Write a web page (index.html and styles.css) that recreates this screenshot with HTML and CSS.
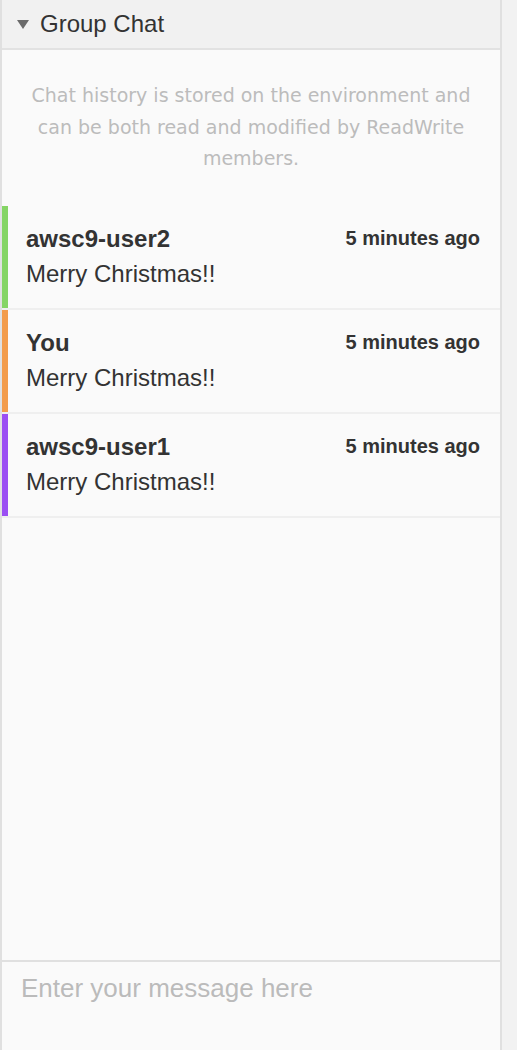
FILE: index.html
```html
<!DOCTYPE html>
<html lang="en">
<head>
  <meta charset="UTF-8" />
  <meta name="viewport" content="width=device-width, initial-scale=1.0"/>
  <title>Group Chat</title>
  <link rel="stylesheet" href="styles.css">
</head>
<body>
  <div class="panel">
    <div class="panel-header">
      <span class="caret"></span>
      <span class="panel-title">Group Chat</span>
    </div>

    <div class="chat-body">
      <p class="notice">Chat history is stored on the environment and can be both read and modified by ReadWrite members.</p>

      <div class="messages">
        <div class="message user-green">
          <div class="message-top">
            <span class="author">awsc9-user2</span>
            <span class="time">5 minutes ago</span>
          </div>
          <div class="text">Merry Christmas!!</div>
        </div>
        <div class="message user-orange">
          <div class="message-top">
            <span class="author">You</span>
            <span class="time">5 minutes ago</span>
          </div>
          <div class="text">Merry Christmas!!</div>
        </div>
        <div class="message user-purple">
          <div class="message-top">
            <span class="author">awsc9-user1</span>
            <span class="time">5 minutes ago</span>
          </div>
          <div class="text">Merry Christmas!!</div>
        </div>
      </div>
    </div>

    <div class="composer">
      <textarea class="chat-input" placeholder="Enter your message here"></textarea>
    </div>
  </div>
</body>
</html>
```

FILE: styles.css
```css
body {
  margin: 0;
  background-color: #f2f2f2;
  font-family: 'Liberation Sans', Arial, sans-serif;
  color: #333;
}

.panel {
  width: 498px;
  height: 1050px;
  border-left: 2px solid #e0e0e0;
  border-right: 2px solid #e0e0e0;
  background-color: #fafafa;
  display: flex;
  flex-direction: column;
}

.panel-header {
  height: 48px;
  background-color: #f1f1f1;
  border-bottom: 2px solid #e2e2e2;
  display: flex;
  align-items: center;
  padding-left: 15px;
}

.caret {
  width: 0;
  height: 0;
  border-left: 6px solid transparent;
  border-right: 6px solid transparent;
  border-top: 9px solid #6b6b6b;
  margin-right: 11px;
  margin-top: 1px;
}

.panel-title {
  font-size: 24px;
  color: #333;
}

.chat-body {
  flex: 1;
}

.notice {
  margin: 0;
  padding: 30px 20px 31px;
  text-align: center;
  font-family: 'DejaVu Sans', sans-serif;
  font-size: 19px;
  line-height: 31.5px;
  color: #bcbcbc;
}

/* each row is 102px + 2px divider */
.message {
  height: 104px;
  box-sizing: border-box;
  padding: 19px 20px 0 24px;
  border-bottom: 2px solid #efefef;
  box-shadow: inset 6px 0 0 var(--bar);
}

.user-green { --bar: #85d565; }
.user-orange { --bar: #f39c4b; }
.user-purple { --bar: #9b4ff3; }

.message-top {
  display: flex;
  justify-content: space-between;
  align-items: center;
}

.author {
  font-weight: bold;
  font-size: 24px;
}

.time {
  font-weight: bold;
  font-size: 20px;
}

.text {
  font-size: 24px;
  margin-top: 7px;
}

.composer {
  height: 88px;
  border-top: 2px solid #e0e0e0;
}

.chat-input {
  width: 100%;
  height: 100%;
  box-sizing: border-box;
  border: none;
  background: transparent;
  resize: none;
  padding: 11px 19px;
  font-family: 'Liberation Sans', Arial, sans-serif;
  font-size: 26px;
  color: #333;
  outline: none;
}

.chat-input::placeholder {
  color: #bbbbbb;
}
```
